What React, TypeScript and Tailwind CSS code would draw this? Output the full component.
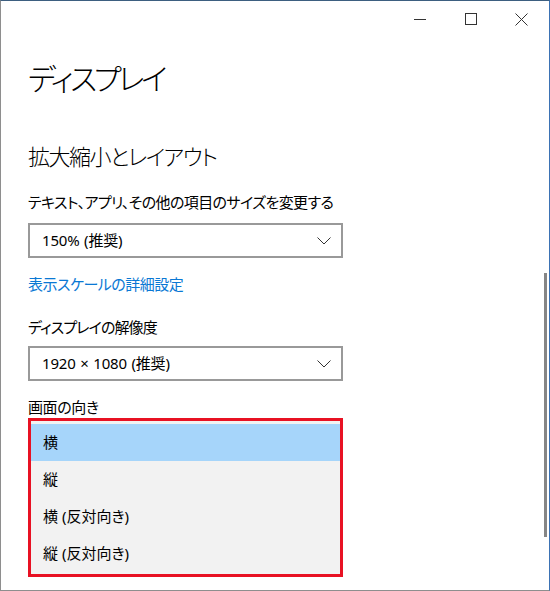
const fontStack = "font-['Noto_Sans','Noto_Sans_CJK_JP',sans-serif] [font-feature-settings:'palt']";

const orientations = ['横', '縦', '横 (反対向き)', '縦 (反対向き)'];

function Chevron() {
  return (
    <svg width="14" height="8" viewBox="0 0 14 8" fill="none" className="shrink-0">
      <polyline points="0.5,0.5 7,7 13.5,0.5" stroke="#333" strokeWidth="1" />
    </svg>
  );
}

function Dropdown({ value }: { value: string }) {
  return (
    <div className="w-[315px] h-[35px] border-2 border-[#999] bg-white flex items-center pl-[12px] pr-[10px]">
      <span className="flex-1 text-[15px] tracking-[-0.2px] [word-spacing:1px] leading-none text-black">{value}</span>
      <Chevron />
    </div>
  );
}

function TitleBar() {
  return (
    <div className="h-[36px] flex justify-end items-center">
      <button aria-label="Minimize" className="w-[51px] h-full flex items-center justify-center">
        <svg width="12" height="1" viewBox="0 0 12 1">
          <rect width="12" height="1" fill="#333" />
        </svg>
      </button>
      <button aria-label="Maximize" className="w-[51px] h-full flex items-center justify-center">
        <svg width="12" height="12" viewBox="0 0 12 12" fill="none">
          <rect x="0.5" y="0.5" width="11" height="11" stroke="#333" />
        </svg>
      </button>
      <button aria-label="Close" className="w-[51px] h-full flex items-center justify-center mr-[2px]">
        <svg width="13" height="13" viewBox="0 0 13 13" fill="none">
          <path d="M0.5 0.5L12.5 12.5M12.5 0.5L0.5 12.5" stroke="#333" />
        </svg>
      </button>
    </div>
  );
}

export default function App() {
  return (
    <div
      className={`relative w-[550px] h-[591px] bg-white border-t border-t-[#3d5f80] border-r border-r-[#3b72b4] border-l border-l-[#8e8e8e] border-b border-b-[#8e8e8e] overflow-hidden ${fontStack}`}
    >
      <TitleBar />

      <div className="pl-[27px]">
        <h1 className="mt-[22px] h-[40px] leading-[40px] text-[30px] tracking-[-3.4px] font-light text-black">
          ディスプレイ
        </h1>

        <h2 className="mt-[42px] h-[30px] leading-[30px] text-[22px] tracking-[-1.5px] font-light text-black">
          拡大縮小とレイアウト
        </h2>

        <div className="mt-[20px] h-[22px] leading-[22px] text-[15px] tracking-[-0.6px] text-black">
          テキスト、アプリ、その他の項目のサイズを変更する
        </div>
        <div className="mt-[10px]">
          <Dropdown value="150% (推奨)" />
        </div>

        <a className="block mt-[15px] h-[22px] leading-[22px] text-[15px] tracking-[-0.5px] text-[#0a78d4] cursor-pointer">
          表示スケールの詳細設定
        </a>

        <div className="mt-[21px] h-[22px] leading-[22px] text-[15px] tracking-[-0.9px] text-black">
          ディスプレイの解像度
        </div>
        <div className="mt-[8px]">
          <Dropdown value="1920 × 1080 (推奨)" />
        </div>

        <div className="mt-[15px] h-[22px] leading-[22px] text-[15px] tracking-[-0.4px] text-black">画面の向き</div>
        <div className="w-[315px] border-[3px] border-[#e81123] bg-[#f2f2f2] pt-[3px] pb-[2px]">
          {orientations.map((o, i) => (
            <div
              key={o}
              className={`h-[37px] flex items-center pl-[12px] text-[15px] text-black ${
                i === 0 ? 'bg-[#a6d5fa]' : ''
              }`}
            >
              {o}
            </div>
          ))}
        </div>
      </div>

      {/* overlay scrollbar */}
      <div className="absolute left-[543px] top-[272px] w-[3px] h-[264px] bg-[#868686]" />
    </div>
  );
}
